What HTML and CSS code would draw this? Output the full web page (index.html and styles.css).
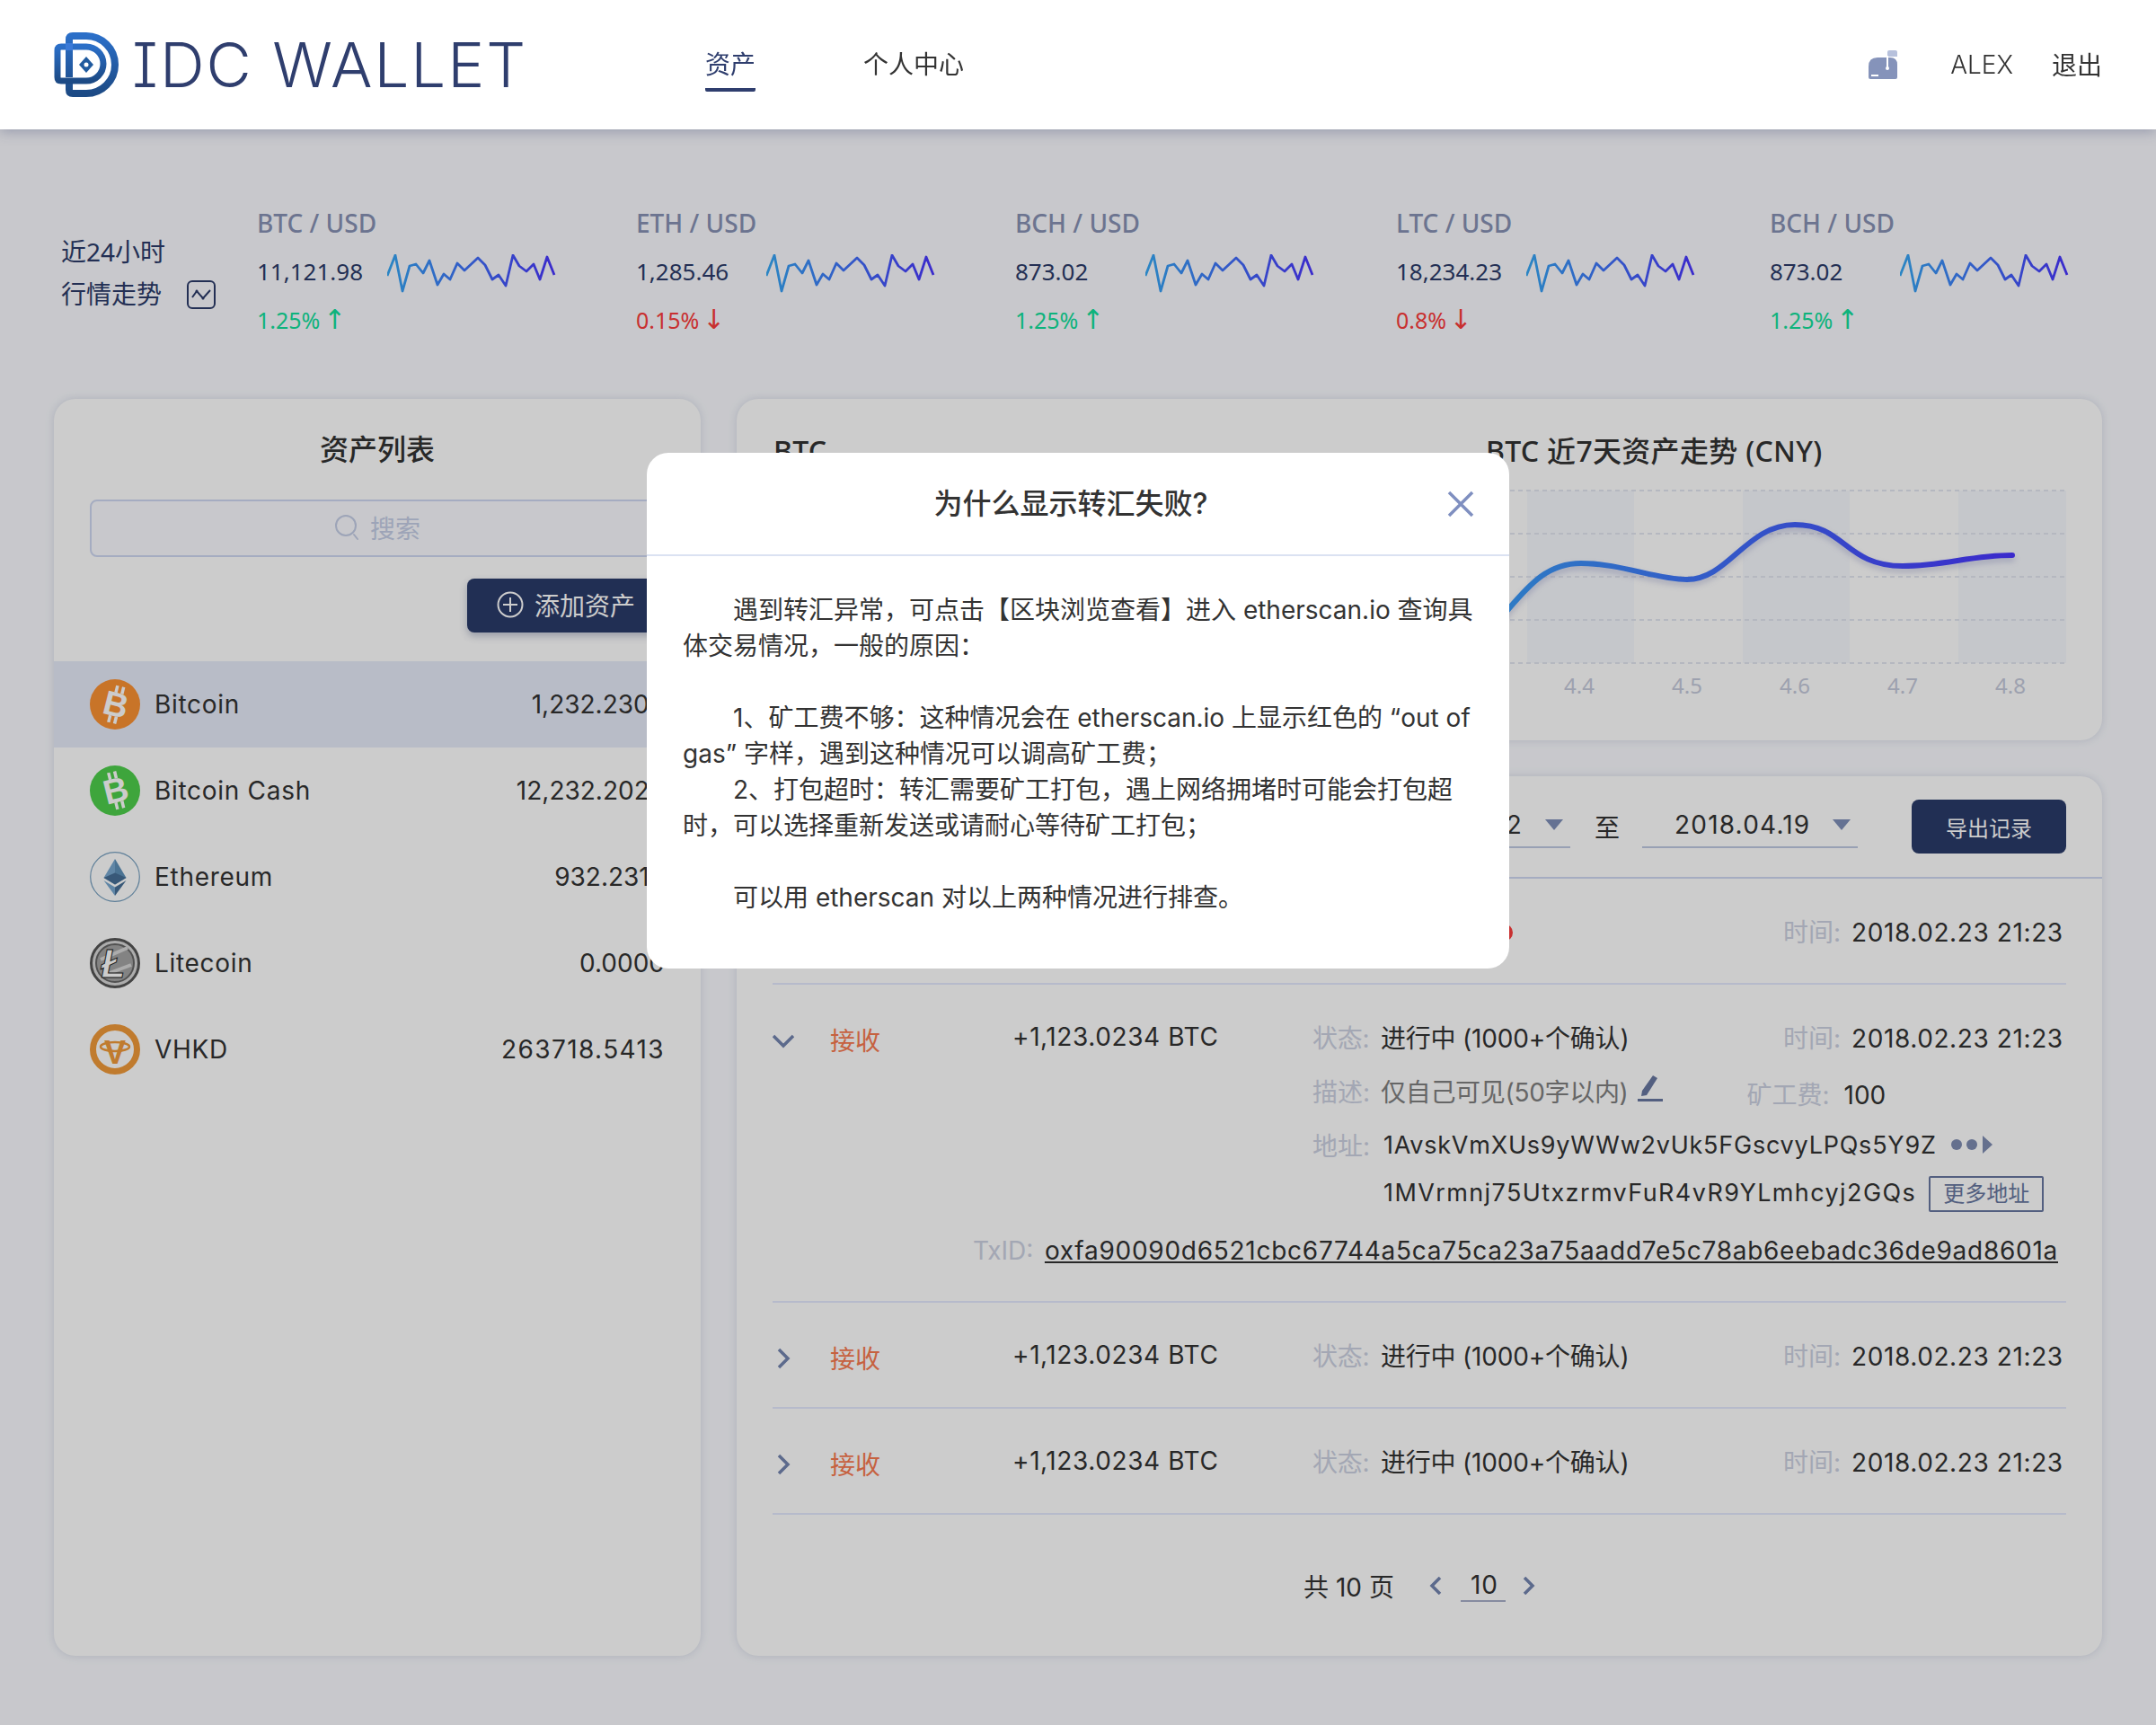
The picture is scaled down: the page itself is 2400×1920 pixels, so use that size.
FILE: index.html
```html
<!DOCTYPE html>
<html lang="zh-CN">
<head>
    <meta charset="UTF-8">
    <meta name="viewport" content="width=device-width, initial-scale=1.0">
    <title>IDC Wallet</title>
    <link rel="stylesheet" href="styles.css">
</head>
<body>

<svg class="defs" width="0" height="0">
    <defs>
        <linearGradient id="sparkGrad" gradientUnits="userSpaceOnUse" x1="0" y1="0" x2="188" y2="0">
            <stop offset="0" stop-color="#36a8f5"/>
            <stop offset="1" stop-color="#4a35ff"/>
        </linearGradient>
        <linearGradient id="curveGrad" gradientUnits="userSpaceOnUse" x1="-100" y1="0" x2="586" y2="0">
            <stop offset="0" stop-color="#36b0f5"/>
            <stop offset="1" stop-color="#4a35ff"/>
        </linearGradient>
        <linearGradient id="logoGrad" x1="0" y1="0" x2="0" y2="1">
            <stop offset="0" stop-color="#2b6fc8"/>
            <stop offset="1" stop-color="#1c4a85"/>
        </linearGradient>
        <symbol id="spark" viewBox="0 0 188 44">
            <polyline fill="none" stroke="url(#sparkGrad)" stroke-width="2.8" stroke-linejoin="round"
                points="0,24 9,1 17,41 25,13 32,11 40,21 47,7 56,34 63,22 70,28 78,10 86,18 101,4 109,12 117,28 124,23 132,35 140,1 147,13 155,19 163,11 170,28 178,3 186,23"/>
        </symbol>
    </defs>
</svg>

<header class="topbar">
    <a class="logo">
        <svg width="72" height="72" viewBox="0 0 72 72" fill="none">
            <path d="M17 46V8Q17 4 21 4H36A32 32 0 0 1 36 68H21Q17 68 17 64V60" stroke="url(#logoGrad)" stroke-width="8" stroke-linecap="square"/>
            <path d="M36 16H8Q4 16 4 20V50Q4 54 8 54H36A19 19 0 0 0 36 16Z" stroke="url(#logoGrad)" stroke-width="7"/>
            <rect x="13" y="12" width="8" height="8" fill="#3a7ad8"/>
            <path d="M36 27L44 36L36 45L28 36Z" fill="#1f5a9f"/>
            <circle cx="36" cy="36" r="2.5" fill="#fff"/>
        </svg>
        <span class="logo-text">IDC WALLET</span>
    </a>
    <nav class="nav">
        <a class="nav-item active">资产</a>
        <a class="nav-item">个人中心</a>
    </nav>
    <div class="user">
        <svg class="mailbox" width="32" height="32" viewBox="0 0 32 32">
            <path d="M0 30V18Q0 8 10 8H24Q32 8 32 16V30Q32 32 30 32H2Q0 32 0 30Z" fill="#8593ba"/>
            <path d="M21 2Q21 0 23 0H30Q32 0 32 2V7H21Z" fill="#b7c1dc"/>
            <rect x="20" y="6" width="2" height="13" fill="#fff"/>
            <circle cx="21" cy="20" r="2" fill="#fff"/>
            <rect x="3" y="27" width="8" height="2" fill="#fff"/>
        </svg>
        <span class="user-name">ALEX</span>
        <a class="logout">退出</a>
    </div>
</header>

<section class="ticker">
    <div class="ticker-label">
        <div>近24小时</div>
        <div class="ticker-label-row">行情走势
            <svg width="32" height="32" viewBox="0 0 32 32" fill="none" stroke="#2c3b6a" stroke-width="2">
                <rect x="1" y="1" width="30" height="30" rx="5"/>
                <path d="M6 19L11 12L18 20L26 11" stroke-width="2"/>
                <circle cx="11" cy="12" r="1.500" fill="#2c3b6a" stroke="none"/>
                <circle cx="18" cy="20" r="1.500" fill="#2c3b6a" stroke="none"/>
            </svg>
        </div>
    </div>
    <div class="quotes">
        <div class="quote">
            <div class="quote-title">BTC / USD</div>
            <div class="quote-main"><span class="quote-value">11,121.98</span><svg class="spark" width="188" height="44"><use href="#spark"/></svg></div>
            <div class="quote-change up">1.25% <span class="arrow">↑</span></div>
        </div>
        <div class="quote">
            <div class="quote-title">ETH / USD</div>
            <div class="quote-main"><span class="quote-value">1,285.46</span><svg class="spark" width="188" height="44"><use href="#spark"/></svg></div>
            <div class="quote-change down">0.15% <span class="arrow">↓</span></div>
        </div>
        <div class="quote">
            <div class="quote-title">BCH / USD</div>
            <div class="quote-main"><span class="quote-value">873.02</span><svg class="spark" width="188" height="44"><use href="#spark"/></svg></div>
            <div class="quote-change up">1.25% <span class="arrow">↑</span></div>
        </div>
        <div class="quote">
            <div class="quote-title">LTC / USD</div>
            <div class="quote-main"><span class="quote-value">18,234.23</span><svg class="spark" width="188" height="44"><use href="#spark"/></svg></div>
            <div class="quote-change down">0.8% <span class="arrow">↓</span></div>
        </div>
        <div class="quote">
            <div class="quote-title">BCH / USD</div>
            <div class="quote-main"><span class="quote-value">873.02</span><svg class="spark" width="188" height="44"><use href="#spark"/></svg></div>
            <div class="quote-change up">1.25% <span class="arrow">↑</span></div>
        </div>
    </div>
</section>

<main class="content">
    <aside class="card assets">
        <h2 class="assets-title">资产列表</h2>
        <div class="search">
            <svg width="30" height="30" viewBox="0 0 30 30" fill="none" stroke="#c5cee6" stroke-width="2">
                <circle cx="13" cy="13" r="11"/>
                <path d="M22 23L26 28" stroke-linecap="round"/>
            </svg>
            <span>搜索</span>
        </div>
        <button class="btn add-btn">
            <svg width="30" height="30" viewBox="0 0 30 30" fill="none" stroke="#fff" stroke-width="2">
                <circle cx="15" cy="15" r="13.5"/>
                <path d="M15 7V23M7 15H23"/>
            </svg>
            添加资产
        </button>
        <ul class="asset-list">
            <li class="asset selected">
                <svg class="coin" viewBox="0 0 56 56">
                    <circle cx="28" cy="28" r="28" fill="#fb9133"/>
                    <g transform="rotate(14 28 28)" fill="#fff">
                        <text x="29" y="41" class="coin-letter" text-anchor="middle">B</text>
                        <rect x="24" y="7" width="3.500" height="8"/><rect x="31" y="7" width="3.500" height="8"/>
                        <rect x="24" y="41" width="3.500" height="8"/><rect x="31" y="41" width="3.500" height="8"/>
                    </g>
                </svg>
                <span class="asset-name">Bitcoin</span>
                <span class="asset-amount">1,232.2303</span>
            </li>
            <li class="asset">
                <svg class="coin" viewBox="0 0 56 56">
                    <circle cx="28" cy="28" r="28" fill="#4ecf4b"/>
                    <g transform="rotate(-14 28 28)" fill="#fff">
                        <text x="29" y="41" class="coin-letter" text-anchor="middle">B</text>
                        <rect x="24" y="7" width="3.500" height="8"/><rect x="31" y="7" width="3.500" height="8"/>
                        <rect x="24" y="41" width="3.500" height="8"/><rect x="31" y="41" width="3.500" height="8"/>
                    </g>
                </svg>
                <span class="asset-name">Bitcoin Cash</span>
                <span class="asset-amount">12,232.2023</span>
            </li>
            <li class="asset">
                <svg class="coin" viewBox="0 0 56 56">
                    <circle cx="28" cy="28" r="27.3" fill="none" stroke="#77a0c0" stroke-width="1.2"/>
                    <path d="M28 8L15.500 29L28 36.500Z" fill="#78a8d0"/>
                    <path d="M28 8L40.500 29L28 36.500Z" fill="#5e90b8"/>
                    <path d="M15.500 29L28 23.500L40.500 29L28 36.500Z" fill="#466f96"/>
                    <path d="M15.500 32L28 39.500V49Z" fill="#78a8d0"/>
                    <path d="M40.500 32L28 39.500V49Z" fill="#466f96"/>
                </svg>
                <span class="asset-name">Ethereum</span>
                <span class="asset-amount">932.2313</span>
            </li>
            <li class="asset">
                <svg class="coin" viewBox="0 0 56 56">
                    <circle cx="28" cy="28" r="26.500" fill="#d8d8d8" stroke="#555" stroke-width="3"/>
                    <circle cx="28" cy="28" r="21" fill="#a4a4a4" stroke="#666" stroke-width="2"/>
                    <path d="M12 24L42 11M14 42L46 30" stroke="#d8d8d8" stroke-width="4"/>
                    <text x="26" y="44" class="coin-letter lite" text-anchor="middle" fill="#fff" stroke="#222" stroke-width="1">Ł</text>
                </svg>
                <span class="asset-name">Litecoin</span>
                <span class="asset-amount">0.0000</span>
            </li>
            <li class="asset">
                <svg class="coin" viewBox="0 0 56 56">
                    <circle cx="28" cy="28" r="24.500" fill="#fff" stroke="#f09a3a" stroke-width="7"/>
                    <ellipse cx="28" cy="25" rx="16" ry="5" fill="none" stroke="#f09a3a" stroke-width="2.500"/>
                    <text x="28" y="44" class="coin-letter vee" text-anchor="middle" fill="#f09a3a">V</text>
                </svg>
                <span class="asset-name">VHKD</span>
                <span class="asset-amount wide">263718.5413</span>
            </li>
        </ul>
    </aside>

    <div class="right-col">
        <section class="card overview">
            <h3 class="card-heading">BTC</h3>
            <div class="trend">
                <h3 class="card-heading">BTC 近7天资产走势 (CNY)</h3>
                <svg class="trend-chart" width="646" height="240" viewBox="0 0 646 240">
                    <rect x="46" y="2" width="119" height="192" class="band"/>
                    <rect x="286" y="2" width="119" height="192" class="band"/>
                    <rect x="526" y="2" width="120" height="192" class="band"/>
                    <path d="M0 2H646M0 50H646M0 98H646M0 146H646M0 194H646" class="grid"/>
                    <path d="M0 163C10 155 20 140 26 133C50 105 70 83 106 83C150 83 190 101 224 101C270 101 290 40 344 40C400 40 400 86 464 86C510 86 540 74 586 74" class="curve"/>
                    <text x="104" y="228" class="tick">4.4</text>
                    <text x="224" y="228" class="tick">4.5</text>
                    <text x="344" y="228" class="tick">4.6</text>
                    <text x="464" y="228" class="tick">4.7</text>
                    <text x="584" y="228" class="tick">4.8</text>
                </svg>
            </div>
        </section>

        <section class="card records">
            <div class="filters">
                <div class="date-pick"><span>2018.04.12</span><i class="tri"></i></div>
                <span class="date-sep">至</span>
                <div class="date-pick"><span>2018.04.19</span><i class="tri"></i></div>
                <button class="btn export-btn">导出记录</button>
            </div>

            <div class="tx">
                <div class="tx-row">
                    <svg class="chev" width="24" height="24" viewBox="0 0 24 24"><path d="M7 2L17 12L7 22"/></svg>
                    <span class="tx-type">发送</span>
                    <span class="num">-1,123.0234 BTC</span>
                    <span class="status"><span class="lbl">状态:</span>转账失败 <i class="fail-dot"></i></span>
                    <span class="num"><span class="lbl">时间:</span>2018.02.23 21:23</span>
                </div>
            </div>

            <div class="tx open">
                <div class="tx-row">
                    <svg class="chev" width="24" height="24" viewBox="0 0 24 24"><path d="M1 7L12 18L23 7"/></svg>
                    <span class="tx-type">接收</span>
                    <span class="num">+1,123.0234 BTC</span>
                    <span class="status"><span class="lbl">状态:</span>进行中 (1000+个确认)</span>
                    <span class="num"><span class="lbl">时间:</span>2018.02.23 21:23</span>
                </div>
                <div class="tx-line desc-line">
                    <span class="lbl">描述:</span><span class="desc">仅自己可见(50字以内)</span>
                    <svg class="pencil" width="28" height="30" viewBox="0 0 28 30">
                        <path d="M17 1L22 4L10 23L4 24L5 18Z" fill="#6877a0"/>
                        <rect x="0" y="27" width="28" height="3" fill="#6877a0"/>
                    </svg>
                    <span class="fee"><span class="lbl">矿工费:</span>100</span>
                </div>
                <div class="tx-line addr-line">
                    <span class="lbl">地址:</span><span class="addr">1AvskVmXUs9yWWw2vUk5FGscvyLPQs5Y9Z</span>
                    <svg class="more-dots" width="48" height="20" viewBox="0 0 48 20">
                        <circle cx="7" cy="10" r="6" fill="#7f8cb2"/><circle cx="24" cy="10" r="6" fill="#7f8cb2"/>
                        <path d="M36 0L47 10L36 20Z" fill="#7f8cb2"/>
                    </svg>
                </div>
                <div class="tx-line addr-line second">
                    <span class="addr">1MVrmnj75UtxzrmvFuR4vR9YLmhcyj2GQs</span>
                    <a class="more-addr">更多地址</a>
                </div>
                <div class="txid-line"><span class="lbl txid-lbl">TxID:</span><a class="txid">oxfa90090d6521cbc67744a5ca75ca23a75aadd7e5c78ab6eebadc36de9ad8601a</a></div>
            </div>

            <div class="tx">
                <div class="tx-row">
                    <svg class="chev" width="24" height="24" viewBox="0 0 24 24"><path d="M7 2L17 12L7 22"/></svg>
                    <span class="tx-type">接收</span>
                    <span class="num">+1,123.0234 BTC</span>
                    <span class="status"><span class="lbl">状态:</span>进行中 (1000+个确认)</span>
                    <span class="num"><span class="lbl">时间:</span>2018.02.23 21:23</span>
                </div>
            </div>

            <div class="tx">
                <div class="tx-row">
                    <svg class="chev" width="24" height="24" viewBox="0 0 24 24"><path d="M7 2L17 12L7 22"/></svg>
                    <span class="tx-type">接收</span>
                    <span class="num">+1,123.0234 BTC</span>
                    <span class="status"><span class="lbl">状态:</span>进行中 (1000+个确认)</span>
                    <span class="num"><span class="lbl">时间:</span>2018.02.23 21:23</span>
                </div>
            </div>

            <div class="pager">
                <span class="pager-total">共 10 页</span>
                <svg class="chev-small" width="14" height="20" viewBox="0 0 14 20"><path d="M12 1L3 10L12 19"/></svg>
                <span class="pager-num">10</span>
                <svg class="chev-small" width="14" height="20" viewBox="0 0 14 20"><path d="M2 1L11 10L2 19"/></svg>
            </div>
        </section>
    </div>
</main>

<div class="mask">
    <div class="modal">
        <div class="modal-head">
            <h3 class="modal-title">为什么显示转汇失败?</h3>
            <svg class="modal-close" width="32" height="32" viewBox="0 0 32 32" fill="none" stroke="#7f8fc0" stroke-width="3.500">
                <path d="M3 3L29 29M29 3L3 29"/>
            </svg>
        </div>
        <div class="modal-body">
            <p>遇到转汇异常，可点击【区块浏览查看】进入 etherscan.io 查询具体交易情况，一般的原因：</p>
            <p class="gap">1、矿工费不够：这种情况会在 etherscan.io 上显示红色的 “out of gas” 字样，遇到这种情况可以调高矿工费；</p>
            <p>2、打包超时：转汇需要矿工打包，遇上网络拥堵时可能会打包超时，可以选择重新发送或请耐心等待矿工打包；</p>
            <p class="gap">可以用 etherscan 对以上两种情况进行排查。</p>
        </div>
    </div>
</div>

</body>
</html>
```
FILE: styles.css
```css
* {
    box-sizing: border-box;
}

html, body {
    margin: 0;
    padding: 0;
}

body {
    height: 1920px;
    overflow: hidden;
    background: #fafbff;
    color: #333;
    font-family: Inter, "Noto Sans CJK SC", sans-serif;
    font-size: 28px;
}

h2, h3, p, ul {
    margin: 0;
    padding: 0;
}

.defs {
    display: block;
    height: 0;
}

/* header */
.topbar {
    position: relative;
    z-index: 20;
    display: flex;
    align-items: center;
    height: 144px;
    padding: 0 60px;
    background: #fff;
    box-shadow: 0 2px 14px rgba(50, 60, 110, 0.35);
}

.logo {
    display: flex;
    align-items: center;
    gap: 15px;
    width: 725px;
}

.logo-text {
    color: #2f3e6e;
    font-size: 69px;
    font-weight: 350;
    font-feature-settings: "cv08";
    letter-spacing: 2px;
    white-space: nowrap;
}

.nav {
    display: flex;
    gap: 120px;
    height: 100%;
    font-family: "Noto Sans CJK SC", sans-serif;
}

.nav-item {
    display: flex;
    align-items: center;
    height: 102px;
    padding-top: 41px;
    border-bottom: 4px solid transparent;
    border-radius: 2px;
}

.nav-item.active {
    color: #2f3e6e;
    border-bottom-color: #2f3e6e;
}

.user {
    display: flex;
    align-items: center;
    margin-left: auto;
}

.mailbox {
    margin-right: 59px;
}

.user-name {
    margin-right: 43px;
    font-weight: 300;
}

.logout {
    margin-top: -2px;
    font-family: "Noto Sans CJK SC", sans-serif;
}

/* 24h quotes */
.ticker {
    display: flex;
    height: 300px;
    padding: 82px 0 0 68px;
    font-family: "Noto Sans", "Noto Sans CJK SC", sans-serif;
}

.ticker-label {
    width: 218px;
    padding-top: 31px;
    color: #2c3b6a;
    line-height: 47px;
}

.ticker-label-row {
    display: flex;
    align-items: center;
    gap: 28px;
}

.quotes {
    display: grid;
    grid-template-columns: 422px 422px 424px 416px auto;
}

.quote-title {
    height: 44px;
    color: #8892b4;
    font-size: 28px;
    font-weight: 500;
    line-height: 44px;
}

.quote-main {
    display: flex;
    align-items: center;
    height: 64px;
}

.quote-value {
    width: 145px;
    color: #2c3b6a;
    font-size: 26px;
}

.spark {
    display: block;
    margin-top: 5px;
}

.quote-change {
    margin-top: 4px;
    font-size: 25px;
    line-height: 36px;
}

.arrow {
    margin-left: -3px;
    font-family: "DejaVu Sans", sans-serif;
    font-size: 30px;
    line-height: 0;
}

.up {
    color: #12e09c;
}

.down {
    color: #fb3c3c;
}

/* main layout */
.content {
    display: grid;
    grid-template-columns: 720px 1520px;
    gap: 40px;
    padding: 0 60px;
}

.card {
    background: #fff;
    border-radius: 24px;
    box-shadow: 0 0 10px rgba(120, 130, 170, 0.25);
}

.assets {
    height: 1399px;
    overflow: hidden;
}

.assets-title {
    padding-top: 34px;
    font-size: 32px;
    font-weight: 500;
    line-height: 46px;
    text-align: center;
}

.search {
    display: flex;
    align-items: center;
    justify-content: center;
    gap: 10px;
    height: 64px;
    margin: 32px 40px 0;
    padding-bottom: 2px;
    color: #c5cee6;
    background: #fafbff;
    border: 2px solid #cfd8f2;
    border-radius: 8px;
}

.btn {
    color: #fff;
    background: #2a3b6a;
    border: none;
    border-radius: 8px;
    font-family: inherit;
}

.add-btn {
    display: flex;
    align-items: center;
    gap: 12px;
    width: 220px;
    height: 60px;
    margin: 24px 40px 0 auto;
    padding: 0 0 2px 33px;
    font-size: 28px;
    box-shadow: 0 4px 8px rgba(42, 59, 106, 0.3);
}

.asset-list {
    margin-top: 32px;
    list-style: none;
}

.asset {
    display: flex;
    align-items: center;
    height: 96px;
    padding: 0 40px;
}

.asset.selected {
    background: #e7ebf9;
}

.coin {
    width: 56px;
    height: 56px;
    margin-right: 16px;
}

.coin-letter {
    font-family: "Liberation Sans", sans-serif;
    font-size: 38px;
    font-weight: 700;
}

.coin-letter.lite {
    font-size: 44px;
    font-style: italic;
}

.coin-letter.vee {
    font-size: 36px;
}

.asset-name {
    letter-spacing: 0.7px;
}

.asset-amount {
    margin-left: auto;
}

.asset-amount.wide {
    letter-spacing: 1.4px;
}

.right-col {
    display: flex;
    flex-direction: column;
    gap: 40px;
}

/* chart card */
.overview {
    display: flex;
    justify-content: space-between;
    height: 380px;
    padding: 36px 40px 0 41px;
}

.card-heading {
    font-size: 32px;
    font-weight: 500;
    line-height: 44px;
    letter-spacing: 0.3px;
    font-family: "Noto Sans", "Noto Sans CJK SC", sans-serif;
}

.trend {
    width: 646px;
}

.trend-chart {
    display: block;
    margin-top: 20px;
    overflow: visible;
}

.band {
    fill: #f7f9fe;
}

.grid {
    fill: none;
    stroke: #e3e6f0;
    stroke-width: 2;
    stroke-dasharray: 5 4;
}

.curve {
    fill: none;
    stroke: url(#curveGrad);
    stroke-width: 6;
    stroke-linecap: round;
    filter: drop-shadow(0 4px 3px rgba(70, 80, 160, 0.25));
}

.tick {
    fill: #c5cadb;
    font-size: 24px;
    font-family: "Noto Sans", sans-serif;
    text-anchor: middle;
}

/* records card */
.records {
    height: 979px;
}

.filters {
    display: flex;
    align-items: center;
    justify-content: flex-end;
    height: 114px;
    padding: 0 40px 0 0;
    border-bottom: 2px solid #cfd8f2;
}

.date-pick {
    display: flex;
    align-items: center;
    justify-content: space-between;
    width: 240px;
    height: 50px;
    margin-top: -3px;
    padding: 0 8px 0 36px;
    border-bottom: 2px solid #bfc8e2;
    letter-spacing: 1.2px;
}

.tri {
    width: 0;
    height: 0;
    border-left: 10px solid transparent;
    border-right: 10px solid transparent;
    border-top: 12px solid #7f8fb8;
}

.date-sep {
    margin: 0 25px 0 27px;
    font-family: "Noto Sans CJK SC", sans-serif;
}

.export-btn {
    width: 172px;
    height: 60px;
    margin-left: 60px;
    font-size: 24px;
}

.tx {
    margin: 0 40px;
    border-bottom: 2px solid #e4e9fe;
}

.tx-row {
    display: grid;
    grid-template-columns: 64px 203px 334px 524px 1fr;
    align-items: center;
    height: 116px;
    padding-bottom: 1px;
    white-space: nowrap;
}

.num {
    letter-spacing: 0.6px;
}

.num .lbl {
    letter-spacing: 0;
}

.status {
    letter-spacing: -0.2px;
}

.tx.open {
    height: 354px;
}

.chev {
    display: block;
    margin-top: 8px;
}

.chev path, .chev-small path {
    fill: none;
    stroke: #7485b0;
    stroke-width: 3.5;
}

.tx-type {
    padding-top: 6px;
    color: #f87a50;
}

.lbl {
    display: inline-block;
    width: 76px;
    color: #ccd1e2;
}

.fail-dot {
    display: inline-block;
    width: 20px;
    height: 20px;
    margin-left: 8px;
    border-radius: 50%;
    background: #fb3c3c;
}

.tx-line {
    display: flex;
    align-items: center;
    height: 36px;
    margin-left: 601px;
    white-space: nowrap;
}

.desc-line {
    margin-top: -16px;
}

.desc {
    color: #808080;
    letter-spacing: -0.3px;
}

.pencil {
    margin: -6px 0 0 10px;
}

.fee {
    margin: 6px 0 0 94px;
}

.fee .lbl {
    width: 108px;
}

.addr-line {
    margin-top: 24px;
}

.addr-line.second {
    margin-top: 17px;
    padding-left: 76px;
}

.addr {
    margin-left: 3px;
    font-size: 27px;
    letter-spacing: 0.77px;
}

.second .addr {
    letter-spacing: 1.4px;
}

.more-dots {
    margin-left: 15px;
}

.more-addr {
    height: 40px;
    margin: 4px 0 0 14px;
    padding: 0 14px;
    color: #6877a0;
    border: 2px solid #6877a0;
    border-radius: 2px;
    font-size: 24px;
    line-height: 36px;
}

.txid-line {
    display: flex;
    align-items: center;
    justify-content: flex-end;
    height: 36px;
    margin-top: 29px;
    padding-right: 9px;
    white-space: nowrap;
}

.txid-lbl {
    width: 80px;
}

.txid {
    letter-spacing: 0.73px;
    text-decoration: underline;
}

.pager {
    display: flex;
    align-items: center;
    justify-content: center;
    height: 60px;
    margin-top: 49px;
}

.pager-total {
    margin-right: 39px;
}

.pager-num {
    width: 50px;
    margin: 0 19px 0 21px;
    padding-left: 3px;
    border-bottom: 2px solid #a8aec8;
    text-align: center;
    letter-spacing: 1px;
}

/* dialog */
.mask {
    position: fixed;
    inset: 0;
    z-index: 10;
    display: flex;
    justify-content: center;
    align-items: flex-start;
    padding-top: 504px;
    background: rgba(0, 0, 0, 0.2);
}

.modal {
    width: 960px;
    background: #fff;
    border-radius: 24px;
}

.modal-head {
    position: relative;
    display: flex;
    align-items: center;
    justify-content: center;
    height: 115px;
    padding: 0 16px 5px 0;
    border-bottom: 2px solid #dbe2f2;
}

.modal-title {
    font-size: 32px;
    font-weight: 500;
}

.modal-close {
    position: absolute;
    top: 41px;
    right: 38px;
}

.modal-body {
    padding: 40px 40px 59px;
    line-height: 40px;
}

.modal-body p {
    text-indent: 56px;
}

.modal-body p.gap {
    margin-top: 40px;
}
```
